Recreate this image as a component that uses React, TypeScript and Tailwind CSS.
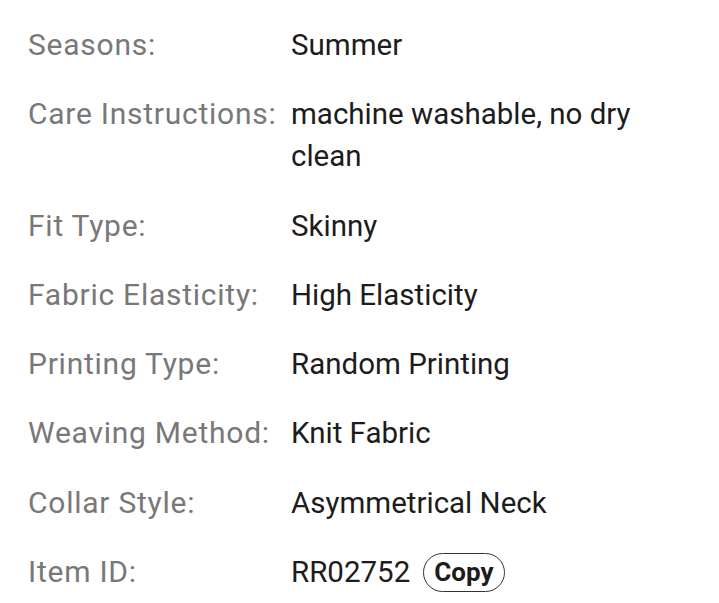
const rows: { label: string; value: string; copy?: boolean }[] = [
  { label: 'Seasons:', value: 'Summer' },
  { label: 'Care Instructions:', value: 'machine washable, no dry clean' },
  { label: 'Fit Type:', value: 'Skinny' },
  { label: 'Fabric Elasticity:', value: 'High Elasticity' },
  { label: 'Printing Type:', value: 'Random Printing' },
  { label: 'Weaving Method:', value: 'Knit Fabric' },
  { label: 'Collar Style:', value: 'Asymmetrical Neck' },
  { label: 'Item ID:', value: 'RR02752', copy: true },
];

export default function App() {
  return (
    <div className="w-[719px] h-[603px] bg-white overflow-hidden font-['Roboto',sans-serif]">
      <div className="pt-[24px] pl-[28px] pr-[20px] flex flex-col gap-[27.3px]">
        {rows.map((r) => (
          <div key={r.label} className="flex leading-[42px]">
            <div className="w-[263px] shrink-0 text-[#787878] text-[30px] tracking-[0.75px]">{r.label}</div>
            <div className="w-[370px] text-[#1c1c1c] text-[29.5px] flex items-center">
              <span>{r.value}</span>
              {r.copy && (
                <span className="ml-[13px] h-[39px] px-[10px] rounded-full border border-[#333] text-[26px] font-bold leading-none flex items-center">
                  Copy
                </span>
              )}
            </div>
          </div>
        ))}
      </div>
    </div>
  );
}
